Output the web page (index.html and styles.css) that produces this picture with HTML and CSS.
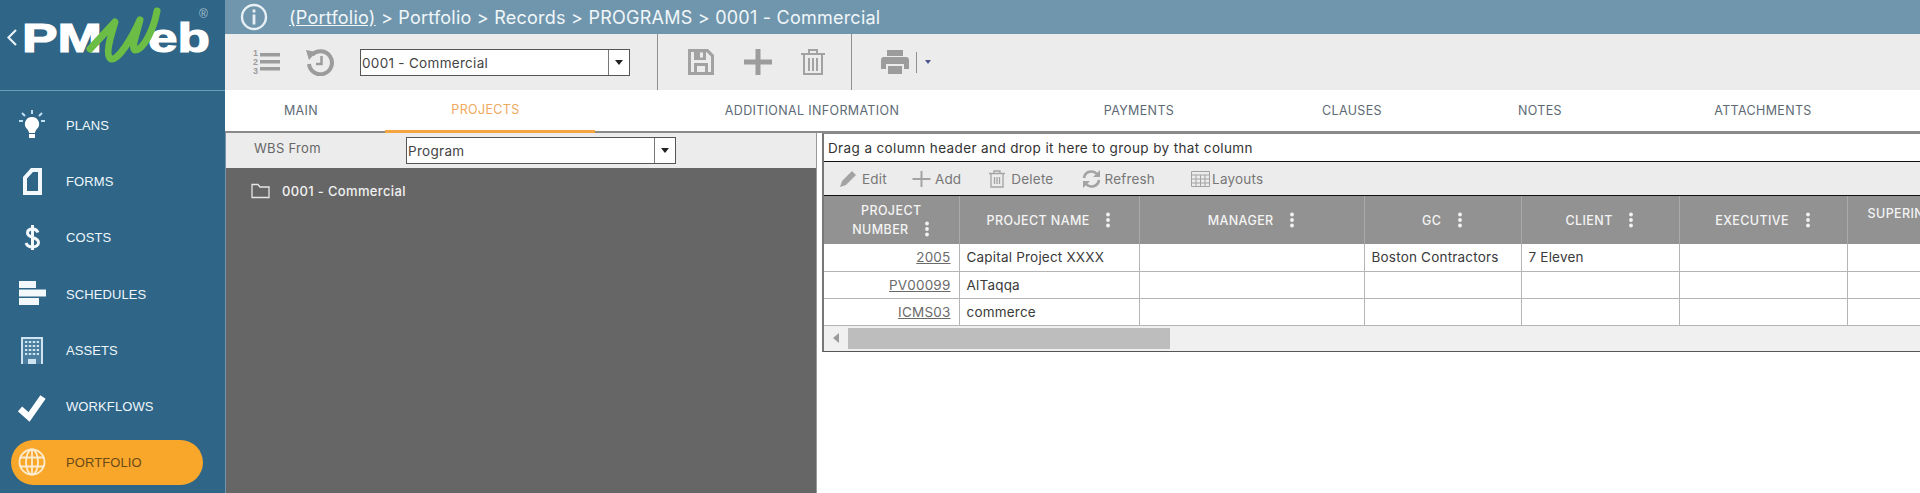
FILE: index.html
```html
<!DOCTYPE html>
<html lang="en">
<head>
<meta charset="utf-8">
<title>PMWeb - Programs</title>
<link rel="stylesheet" href="styles.css">
</head>
<body>
<svg class="defs" width="0" height="0" aria-hidden="true">
  <symbol id="dots" viewBox="0 0 6 16"><circle cx="3" cy="2.5" r="1.9"/><circle cx="3" cy="8" r="1.9"/><circle cx="3" cy="13.5" r="1.9"/></symbol>
</svg>
<div class="app">
  <aside class="sidebar">
    <div class="logo">
      <svg class="logo-svg" width="225" height="90" viewBox="0 0 225 90">
        <path d="M16 30 L8.500 37.500 L16 45" fill="none" stroke="#e8f1f6" stroke-width="2.200"/>
        <text class="logo-text" x="22" y="52" textLength="80" lengthAdjust="spacingAndGlyphs">PM</text>
        <text class="logo-text" x="148" y="52" textLength="62" lengthAdjust="spacingAndGlyphs">eb</text>
        <path d="M90 49 L115 22 C110 38 105 56 111 59 C118 61 132 38 140 20 C136 36 131 48 135 50 C144 50 154 28 157 11" fill="none" stroke="#6cbd45" stroke-width="7" stroke-linecap="round" stroke-linejoin="round"/>
        <text class="logo-reg" x="199" y="18">®</text>
      </svg>
    </div>
    <nav class="nav">
      <a class="nav-item">
        <svg class="nav-icon" width="28" height="30" viewBox="0 0 28 30"><g fill="#fff"><path d="M14 7a7 7 0 0 0-5 12c1.500 1.500 2 3 2 4h6c0-1 .5-2.500 2-4a7 7 0 0 0-5-12z"/><rect x="11" y="24" width="6" height="4"/></g><g stroke="#bfe0f2" stroke-width="2"><path d="M14 0v4M4 3l3 3M24 3l-3 3M1 11h4M23 11h4"/></g></svg>
        <span>PLANS</span>
      </a>
      <a class="nav-item">
        <svg class="nav-icon" width="28" height="30" viewBox="0 0 28 30"><path d="M5 11 L13 2 H24 V29 H5 Z M9 12.500 V25 H20 V6 H15 Z" fill="#f2f8fb" fill-rule="evenodd"/></svg>
        <span>FORMS</span>
      </a>
      <a class="nav-item">
        <svg class="nav-icon" width="28" height="30" viewBox="0 0 28 30"><path d="M20 9.500C19 7 17 6 14.500 6 11.500 6 9.500 7.500 9.500 10c0 5.500 11 3.500 11 9.500 0 2.800-2.500 4.500-6 4.500-3 0-5.500-1.300-6.500-4M14.500 2v25" fill="none" stroke="#f2f8fb" stroke-width="3"/></svg>
        <span>COSTS</span>
      </a>
      <a class="nav-item">
        <svg class="nav-icon" width="28" height="30" viewBox="0 0 28 30"><path d="M1 2h17v7H1zM1 10.500h27v7H1zM1 19h20v7H1z" fill="#f2f8fb"/></svg>
        <span>SCHEDULES</span>
      </a>
      <a class="nav-item">
        <svg class="nav-icon" width="28" height="30" viewBox="0 0 28 30"><path d="M3 2h22v27H3z" fill="#cfe4f0"/><path d="M5 4h18v25h-5v-5h-8v5H5z" fill="#4c7f9f"/><path d="M7 6h14v2H7zM7 10h14v2H7zM7 14h14v2H7zM7 18h14v2H7z" fill="#cfe4f0"/><path d="M10 5v16M14 5v16M18 5v16" stroke="#4c7f9f" stroke-width="1.500"/></svg>
        <span>ASSETS</span>
      </a>
      <a class="nav-item">
        <svg class="nav-icon" width="28" height="30" viewBox="0 0 28 30"><path d="M2 17 L11 25 L25 5" fill="none" stroke="#fff" stroke-width="6.500"/></svg>
        <span>WORKFLOWS</span>
      </a>
      <a class="nav-item active">
        <svg class="nav-icon" width="28" height="30" viewBox="0 0 28 30"><g fill="none" stroke="#fdeccf" stroke-width="1.800"><circle cx="14" cy="15" r="12.500"/><ellipse cx="14" cy="15" rx="6" ry="12.500"/><path d="M14 2.500v25M2 10.500h24M2 19.500h24"/></g></svg>
        <span>PORTFOLIO</span>
      </a>
    </nav>
  </aside>

  <main class="main">
    <header class="crumbs">
      <svg class="info" width="28" height="28" viewBox="0 0 28 28"><circle cx="14" cy="14" r="12" fill="none" stroke="#e8f0f5" stroke-width="2.400"/><path d="M12.600 6.500h2.800v3h-2.800zM12.600 11.500h2.800v10h-2.800z" fill="#e8f0f5"/></svg>
      <span class="crumb-text"><span class="crumb-link">(Portfolio)</span> &gt; Portfolio &gt; Records &gt; PROGRAMS &gt; 0001 - Commercial</span>
    </header>

    <div class="toolbar">
      <div class="tool-group first">
        <svg width="28" height="28" viewBox="0 0 28 28"><path d="M8 5h20v3.500H8zM8 12h20v3.500H8zM8 19h20v3.500H8z" fill="#9c9c9c"/><g class="mini-nums"><text x="1" y="8">1</text><text x="1" y="17">2</text><text x="1" y="26">3</text></g></svg>
        <svg width="28" height="28" viewBox="0 0 28 28"><path d="M6 7a11.500 11.500 0 1 1-3 9" fill="none" stroke="#9c9c9c" stroke-width="4"/><path d="M0 2l10 2-7 8z" fill="#9c9c9c"/><path d="M15.500 8v8H10" fill="none" stroke="#9c9c9c" stroke-width="2.500"/></svg>
        <div class="combo combo-top"><span class="combo-value">0001 - Commercial</span><span class="combo-arrow"></span></div>
      </div>
      <div class="tool-group second">
        <svg width="28" height="28" viewBox="0 0 28 28"><path d="M1 1h20l6 6v20H1z M4 4v20h3V15h14v9h3V8.500L19.500 4H19v8H7V4z M10 18v6h8v-6z M13 4.500h3v5h-3z" fill="#a2a2a2" fill-rule="evenodd"/></svg>
        <svg width="28" height="28" viewBox="0 0 28 28"><path d="M11.500 1h5v10.500H28v5H16.500V27h-5V16.500H0v-5h11.500z" fill="#9c9c9c"/></svg>
        <svg width="24" height="28" viewBox="0 0 24 28"><g fill="none" stroke="#a2a2a2" stroke-width="2"><path d="M0 6h24M8 5V2h8v3M3 7v19h18V7"/></g><path d="M7 10h2v13H7zM11 10h2v13h-2zM15 10h2v13h-2z" fill="#a2a2a2"/></svg>
      </div>
      <div class="tool-group third">
        <svg width="28" height="26" viewBox="0 0 28 26"><path d="M6 1h16v6H6zM3 8h22a3 3 0 0 1 3 3v9h-5v-5H5v5H0v-9a3 3 0 0 1 3-3zM7 17h14v8H7z" fill="#9c9c9c"/></svg>
        <span class="print-sep"></span>
        <span class="print-caret"></span>
      </div>
    </div>

    <div class="tabs">
      <a class="tab tab-main">MAIN</a>
      <a class="tab active">PROJECTS</a>
      <a class="tab">ADDITIONAL INFORMATION</a>
      <a class="tab">PAYMENTS</a>
      <a class="tab">CLAUSES</a>
      <a class="tab">NOTES</a>
      <a class="tab">ATTACHMENTS</a>
    </div>

    <div class="content">
      <section class="left">
        <div class="wbs">
          <span class="wbs-label">WBS From</span>
          <div class="combo combo-wbs"><span class="combo-value">Program</span><span class="combo-arrow"></span></div>
        </div>
        <div class="tree">
          <div class="tree-node">
            <svg width="19" height="16" viewBox="0 0 19 16"><path d="M1 14.500V1.500h6l2 2.500h9v10.500z" fill="none" stroke="#e6e6e6" stroke-width="1.300"/></svg>
            <span>0001 - Commercial</span>
          </div>
        </div>
      </section>

      <section class="right">
        <div class="grid">
          <div class="group-row">Drag a column header and drop it here to group by that column</div>
          <div class="grid-tools">
            <span class="gt gt-edit"><svg width="19" height="18" viewBox="0 0 19 18"><path d="M1 17l2-6L13 1l4 4L7 15z" fill="#a3a3a3"/></svg>Edit</span>
            <span class="gt gt-add"><svg width="19" height="18" viewBox="0 0 19 18"><path d="M8.500 1h2v7h8v2h-8v7h-2v-7h-8V8h8z" fill="#a3a3a3"/></svg>Add</span>
            <span class="gt gt-del"><svg width="16" height="18" viewBox="0 0 16 18"><g fill="none" stroke="#a3a3a3" stroke-width="1.300"><path d="M0 3.500h16M5 3V1h6v2M2 4v13h12V4M5.500 7v7M8 7v7M10.500 7v7"/></g></svg>Delete</span>
            <span class="gt gt-ref"><svg width="19" height="18" viewBox="0 0 19 18"><g fill="none" stroke="#a3a3a3" stroke-width="2.600"><path d="M2 8a7.500 7.500 0 0 1 13-4M17 10a7.500 7.500 0 0 1-13 4"/></g><path d="M18 0v7h-7zM1 18v-7h7z" fill="#a3a3a3"/></svg>Refresh</span>
            <span class="gt gt-lay"><svg width="19" height="16" viewBox="0 0 19 16"><path d="M.5.500h18v15H.5zM.5 4h18M.5 8h18M.5 12h18M5 4v11.500M9.500 4v11.500M14 4v11.500" fill="none" stroke="#a3a3a3"/></svg>Layouts</span>
          </div>
          <div class="table-wrap">
            <table class="table">
              <colgroup>
                <col class="c1"><col class="c2"><col class="c3"><col class="c4"><col class="c5"><col class="c6"><col class="c7">
              </colgroup>
              <thead>
                <tr>
                  <th>PROJECT<br>NUMBER <svg class="dots" width="6" height="16"><use href="#dots"/></svg></th>
                  <th>PROJECT NAME <svg class="dots" width="6" height="16"><use href="#dots"/></svg></th>
                  <th>MANAGER <svg class="dots" width="6" height="16"><use href="#dots"/></svg></th>
                  <th>GC <svg class="dots" width="6" height="16"><use href="#dots"/></svg></th>
                  <th>CLIENT <svg class="dots" width="6" height="16"><use href="#dots"/></svg></th>
                  <th>EXECUTIVE <svg class="dots" width="6" height="16"><use href="#dots"/></svg></th>
                  <th class="th-clip">SUPERINTENDENT</th>
                </tr>
              </thead>
              <tbody>
                <tr><td class="num"><a>2005</a></td><td>Capital Project XXXX</td><td></td><td>Boston Contractors</td><td>7 Eleven</td><td></td><td></td></tr>
                <tr><td class="num"><a>PV00099</a></td><td>AlTaqqa</td><td></td><td></td><td></td><td></td><td></td></tr>
                <tr><td class="num"><a>ICMS03</a></td><td>commerce</td><td></td><td></td><td></td><td></td><td></td></tr>
              </tbody>
            </table>
          </div>
          <div class="scrollbar">
            <span class="sb-left"></span>
            <span class="sb-thumb"></span>
            <span class="sb-right"></span>
          </div>
        </div>
      </section>
    </div>
  </main>
</div>
</body>
</html>
```

FILE: styles.css
```css
* { box-sizing: border-box; }
html, body { margin: 0; height: 493px; overflow: hidden; }
body { font-family: Inter, "Open Sans", "Liberation Sans", sans-serif; background: #fff; color: #333; }
.defs { position: absolute; }
.app { display: grid; grid-template-columns: 225px 1fr; height: 493px; }

/* sidebar */
.sidebar { background: #2f6587; display: flex; flex-direction: column; }
.logo { height: 91px; border-bottom: 1px solid #6d9dbd; }
.logo-svg { display: block; }
.logo-text { font-family: "Liberation Sans", sans-serif; font-weight: 700; font-size: 41px; fill: #fff; stroke: #fff; stroke-width: 1.200px; }
.logo-reg { font-family: "Liberation Sans", sans-serif; font-size: 12px; fill: #a9c0cf; }
.nav { display: flex; flex-direction: column; padding-top: 6px; }
.nav-item { display: flex; align-items: center; height: 56.300px; font-family: "Liberation Sans", sans-serif; font-size: 13px; color: #eef7fc; letter-spacing: .1px; }
.nav-icon { margin-left: 18px; margin-right: 20px; flex: none; }
.nav-item.active { position: relative; height: 45px; margin: 5px 22px 0 11px; background: #f9a72b; border-radius: 23px; color: #6b4a18; }
.nav-item.active .nav-icon { margin-left: 7px; margin-right: 20px; }

/* header */
.main { display: flex; flex-direction: column; min-width: 0; }
.crumbs { height: 34px; background: #7096ae; display: flex; align-items: center; color: #f1f6f9; font-size: 18px; letter-spacing: .23px; padding-left: 16px; gap: 21px; }
.crumb-link { text-decoration: underline; }
.info { flex: none; margin-left: -1px; }

/* toolbar */
.toolbar { height: 56px; background: #ececec; display: flex; align-items: center; }
.tool-group { height: 100%; display: flex; align-items: center; border-right: 1px solid #8f8f8f; }
.tool-group.first { width: 433px; padding-left: 27px; gap: 26px; }
.tool-group.second { width: 194px; padding-left: 29px; gap: 29px; }
.tool-group.third { border-right: 0; padding-left: 29px; }
.mini-nums { font-family: "Liberation Sans", sans-serif; font-weight: 700; font-size: 9px; fill: #9c9c9c; }
.combo { display: flex; align-items: stretch; background: #fff; border: 1px solid #555; font-size: 13.500px; letter-spacing: .3px; color: #444; }
.combo-top { width: 270px; height: 27px; }
.combo-wbs { width: 270px; height: 27px; }
.combo-value { flex: 1; padding-left: 1px; line-height: 26px; }
.combo-arrow { width: 21px; border-left: 1px solid #777; position: relative; }
.combo-arrow::after { content: ""; position: absolute; left: 6px; top: 10px; border: 4px solid transparent; border-top: 5px solid #222; border-bottom: 0; }
.print-sep { width: 1px; height: 21px; background: #8f8f8f; margin-left: 7px; }
.print-caret { margin-left: 8px; border: 3.500px solid transparent; border-top: 4px solid #4a5590; border-bottom: 0; }

/* tabs */
.tabs { height: 43px; display: grid; grid-template-columns: 160px 210px 434px 220px 206px 170px 276px; border-bottom: 2px solid #8a8a8a; font-size: 12.500px; letter-spacing: .35px; color: #5d6a75; }
.tab { display: flex; align-items: center; justify-content: center; height: 41px; }
.tab-main { padding-right: 8px; }
.tab.active { color: #f0a85c; height: 43px; padding: 0 9px 2px 0; border-bottom: 3px solid #f5a540; }

/* content */
.content { flex: 1; display: grid; grid-template-columns: 591px 1fr; min-height: 0; }
.left { display: flex; flex-direction: column; border-left: 1px solid #7096ae; }
.wbs { height: 35px; background: #ececec; display: flex; align-items: flex-start; padding: 4px 0 0 28px; font-size: 13px; letter-spacing: .3px; color: #666; }
.wbs-label { width: 152px; line-height: 22px; }
.tree { flex: 1; background: #666; padding-top: 15px; }
.tree-node { display: flex; align-items: center; gap: 12px; padding-left: 25px; color: #f2f2f2; font-size: 13px; letter-spacing: .35px; font-weight: 500; }
.right { padding: 0 1px 0 5px; border-left: 1px solid #999; }

/* grid */
.grid { border: 1px solid #555; border-top: 1px solid #888; border-left: 2px solid #777; }
.group-row { height: 28px; line-height: 28px; padding-left: 4px; font-size: 13.500px; letter-spacing: .38px; color: #333; border-bottom: 1px solid #111; }
.grid-tools { height: 34px; background: #ececec; display: flex; align-items: center; border-bottom: 1px solid #111; font-size: 13.500px; letter-spacing: .2px; color: #777; }
.gt { display: inline-flex; align-items: center; gap: 4px; }
.gt-edit { margin-left: 15px; }
.gt-add { margin-left: 25px; }
.gt-del { margin-left: 28px; gap: 6px; }
.gt-ref { margin-left: 29px; gap: 3px; }
.gt-lay { margin-left: 36px; gap: 2px; }
.table-wrap { overflow: hidden; }
.table { border-collapse: collapse; table-layout: fixed; width: 1158px; font-size: 13.500px; letter-spacing: .2px; }
.c1 { width: 135px; } .c2 { width: 180px; } .c3 { width: 225px; } .c4 { width: 157px; } .c5 { width: 158px; } .c6 { width: 168px; } .c7 { width: 135px; }
th { height: 48px; padding: 0 4px; background: #929292; color: #f4f4f4; font-weight: 500; font-size: 12.500px; letter-spacing: .4px; line-height: 19px; text-align: center; border-right: 1px solid #a9a9a9; }
.dots { fill: #f2f2f2; vertical-align: -3px; margin-left: 12px; }
.th-clip { white-space: nowrap; text-align: left; vertical-align: top; padding: 8px 0 0 20px; }
td { height: 27px; padding: 0 7px; border-right: 1px solid #b5b5b5; border-bottom: 1px solid #b5b5b5; white-space: nowrap; color: #3a3a3a; }
.num { text-align: right; padding-right: 8px; }
.num a { color: #6a6a6a; text-decoration: underline; }
.scrollbar { height: 25px; background: #f0f0f0; display: flex; align-items: center; }
.sb-left { margin-left: 9px; border: 5px solid transparent; border-right: 6px solid #9a9a9a; border-left: 0; }
.sb-thumb { width: 322px; height: 21px; background: #bdbdbd; margin-left: 9px; }
.sb-right { margin-left: auto; margin-right: 10px; border: 5px solid transparent; border-left: 6px solid #333; border-right: 0; }
```
